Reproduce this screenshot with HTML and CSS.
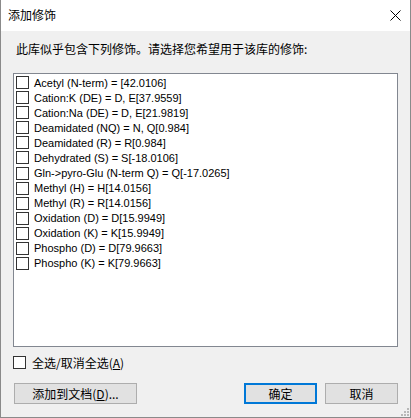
FILE: index.html
```html
<!DOCTYPE html>
<html lang="zh-CN">
<head>
<meta charset="utf-8">
<title>添加修饰</title>
<link rel="stylesheet" href="styles.css">
</head>
<body>
<div class="window">
  <div class="titlebar">
    <span class="title">添加修饰</span>
    <svg class="close" width="11" height="11" viewBox="0 0 11 11"><path d="M0.5 0.5 L10.5 10.5 M10.5 0.5 L0.5 10.5" stroke="#000" stroke-width="1" fill="none"/></svg>
  </div>
  <div class="content">
    <div class="label">此库似乎包含下列修饰。请选择您希望用于该库的修饰:</div>
    <div class="listbox">
      <div class="item"><span class="box"></span><span>Acetyl (N-term) = [42.0106]</span></div>
      <div class="item"><span class="box"></span><span>Cation:K (DE) = D, E[37.9559]</span></div>
      <div class="item"><span class="box"></span><span>Cation:Na (DE) = D, E[21.9819]</span></div>
      <div class="item"><span class="box"></span><span>Deamidated (NQ) = N, Q[0.984]</span></div>
      <div class="item"><span class="box"></span><span>Deamidated (R) = R[0.984]</span></div>
      <div class="item"><span class="box"></span><span>Dehydrated (S) = S[-18.0106]</span></div>
      <div class="item"><span class="box"></span><span>Gln-&gt;pyro-Glu (N-term Q) = Q[-17.0265]</span></div>
      <div class="item"><span class="box"></span><span>Methyl (H) = H[14.0156]</span></div>
      <div class="item"><span class="box"></span><span>Methyl (R) = R[14.0156]</span></div>
      <div class="item"><span class="box"></span><span>Oxidation (D) = D[15.9949]</span></div>
      <div class="item"><span class="box"></span><span>Oxidation (K) = K[15.9949]</span></div>
      <div class="item"><span class="box"></span><span>Phospho (D) = D[79.9663]</span></div>
      <div class="item"><span class="box"></span><span>Phospho (K) = K[79.9663]</span></div>
    </div>
    <div class="selectall"><span class="box"></span><span class="cjk">全选/取消全选(<u>A</u>)</span></div>
    <div class="buttons">
      <button class="btn btn-wide">添加到文档(<u>D</u>)...</button>
      <div class="spacer"></div>
      <button class="btn btn-default">确定</button>
      <button class="btn">取消</button>
    </div>
  </div>
  <svg class="grip" width="10" height="10" viewBox="0 0 10 10">
    <rect x="7" y="1" width="2" height="2" fill="#b8b8b8"/>
    <rect x="4" y="4" width="2" height="2" fill="#b8b8b8"/>
    <rect x="7" y="4" width="2" height="2" fill="#b8b8b8"/>
    <rect x="1" y="7" width="2" height="2" fill="#b8b8b8"/>
    <rect x="4" y="7" width="2" height="2" fill="#b8b8b8"/>
    <rect x="7" y="7" width="2" height="2" fill="#b8b8b8"/>
  </svg>
</div>
</body>
</html>
```
FILE: styles.css
```css
html, body {
  margin: 0;
  padding: 0;
  background: #f0f0f0;
}
.window {
  position: relative;
  width: 411px;
  height: 418px;
  box-sizing: border-box;
  border: 1px solid #8a8a8a;
  border-top: none;
  background: #f0f0f0;
  display: flex;
  flex-direction: column;
  font-family: "Noto Sans CJK SC", "Liberation Sans", sans-serif;
  font-size: 12px;
  color: #000;
}
.titlebar {
  height: 31px;
  background: #fff;
  display: flex;
  align-items: center;
  padding: 0 9px 0 7px;
  flex: none;
}
.title {
  flex: 1;
  line-height: 16px;
  margin-top: -1px;
}
.close {
  display: block;
  margin-top: -1px;
}
.content {
  flex: 1;
  display: flex;
  flex-direction: column;
  padding: 0 12px;
}
.label {
  margin-top: 10px;
  padding-left: 3px;
  line-height: 16px;
  height: 16px;
}
.listbox {
  margin-top: 16px;
  height: 274px;
  box-sizing: border-box;
  border: 1px solid #828790;
  background: #fff;
  padding: 1px 2px;
  font-family: "Liberation Sans", Arial, sans-serif;
  font-size: 11px;
}
.item {
  display: flex;
  align-items: center;
  height: 15.08px;
  gap: 5px;
}
.box {
  display: block;
  width: 13px;
  height: 13px;
  box-sizing: border-box;
  border: 1px solid #333;
  background: #fff;
  flex: none;
}
.selectall {
  margin-top: 9px;
  display: flex;
  align-items: center;
  height: 13px;
  gap: 6px;
}
.selectall .cjk {
  line-height: 16px;
}
.buttons {
  margin-top: 14px;
  display: flex;
  padding-left: 1px;
  gap: 8px;
}
.spacer {
  flex: 1;
}
.btn {
  height: 21px;
  width: 73px;
  box-sizing: border-box;
  border: 1px solid #adadad;
  background: #e1e1e1;
  font-family: "Noto Sans CJK SC", "Liberation Sans", sans-serif;
  font-size: 12px;
  line-height: 16px;
  padding: 0;
  color: #000;
  margin: 0;
}
.btn-wide {
  width: 123px;
}
.btn-default {
  border: 2px solid #0078d7;
}
u {
  text-decoration: underline;
  text-underline-offset: 1px;
}
.grip {
  position: absolute;
  right: 0;
  bottom: 0;
}
```
